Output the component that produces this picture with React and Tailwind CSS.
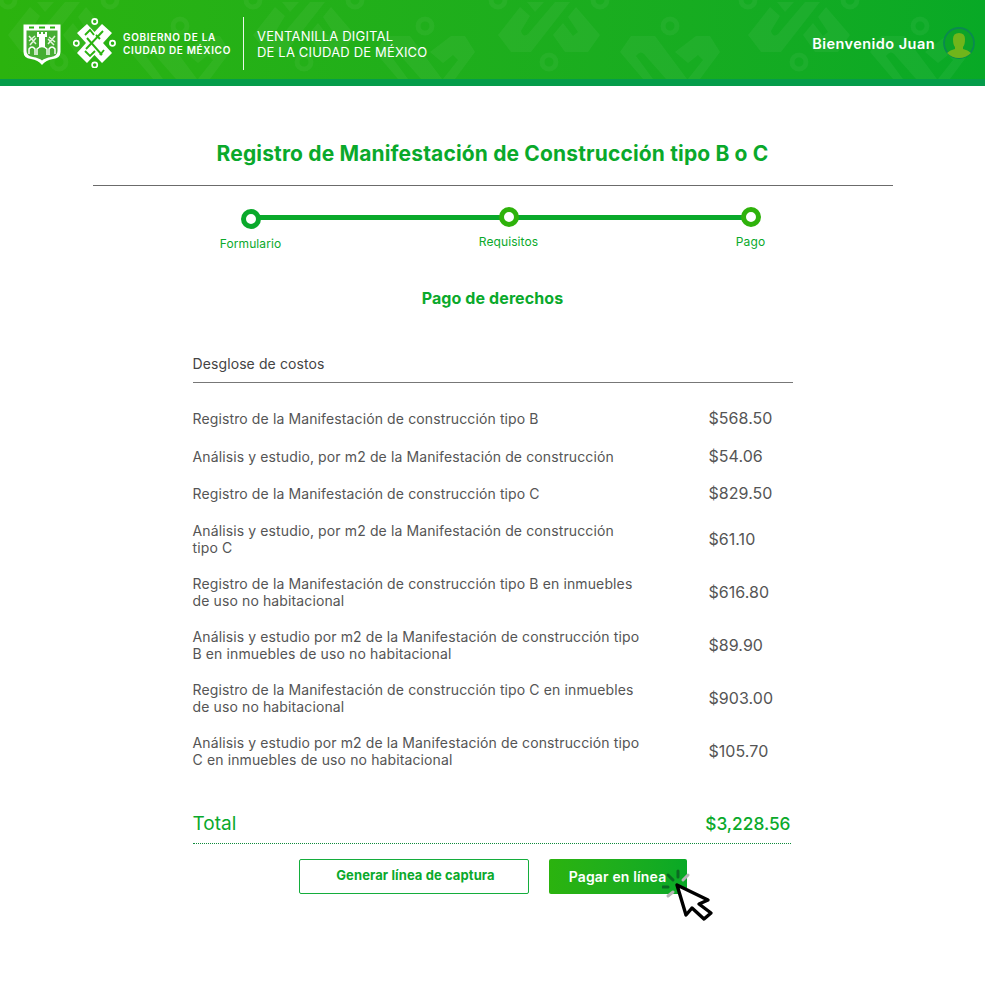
import React from "react";

const costs = [
  { label: ["Registro de la Manifestación de construcción tipo B"], price: "$568.50" },
  { label: ["Análisis y estudio, por m2 de la Manifestación de construcción"], price: "$54.06" },
  { label: ["Registro de la Manifestación de construcción tipo C"], price: "$829.50" },
  { label: ["Análisis y estudio, por m2 de la Manifestación de construcción", "tipo C"], price: "$61.10" },
  { label: ["Registro de la Manifestación de construcción tipo B en inmuebles", "de uso no habitacional"], price: "$616.80" },
  { label: ["Análisis y estudio por m2 de la Manifestación de construcción tipo", "B en inmuebles de uso no habitacional"], price: "$89.90" },
  { label: ["Registro de la Manifestación de construcción tipo C en inmuebles", "de uso no habitacional"], price: "$903.00" },
  { label: ["Análisis y estudio por m2 de la Manifestación de construcción tipo", "C en inmuebles de uso no habitacional"], price: "$105.70" },
];

// one repeat of the faint background pattern in the header
function Tile({ x }) {
  return (
    <g transform={`translate(${x} 0)`}>
      <g fill="#fff" fillOpacity="0.048">
        <path d="M0 35 L22 7 L32 16 L23 31 Q25 38 30 34 L57 2 H72 L33 52 H13 Z" />
        <path d="M29 2 H46 L37 12 Z" />
        <path d="M55 35 L65 23 L75 36 L80 32 L70 17 L78 7 L102 35 L90 52 H67 Z" />
        <path d="M122 52 L133 36 H157 L189 79 H168 L146 54 Q142 50 138 56 L155 79 H145 Z" />
        <path d="M177 52 L198 36 H212 L222 52 L202 79 H190 L205 60 L200 55 L190 63 Z" />
      </g>
      <g fill="none" stroke="#fff" strokeOpacity="0.048" strokeWidth="5">
        <circle cx="0" cy="0" r="7" />
        <circle cx="102" cy="0" r="7" />
        <circle cx="51" cy="62" r="7" />
        <circle cx="172" cy="26" r="7" />
      </g>
    </g>
  );
}

function HeaderPattern() {
  return (
    <svg className="absolute inset-0" width="985" height="79" viewBox="0 0 985 79">
      {[8, 253, 498, 748].map((x) => (
        <Tile key={x} x={x} />
      ))}
    </svg>
  );
}

function Shield() {
  return (
    <svg width="38" height="41" viewBox="0 0 38 41" className="shrink-0">
      <path d="M0.5 0.5 H37.5 V28 Q37.5 34 30 35 Q23 36 19 41 Q15 36 8 35 Q0.5 34 0.5 28 Z" fill="#fff" />
      <path d="M3.5 6.5 H34.5 V27 Q34.5 32 28 33 Q22 34 19 36.5 Q16 34 10 33 Q3.5 32 3.5 27 Z" fill="#46ad33" />
      <path d="M14 8 h2 v2 h2 v-2 h2 v2 h2 v-2 h2 v5 h-2 v10 h-6 V13 h-2 Z" fill="#fff" />
      <path d="M6 12 L13 20 M6 17 L12 12 M7 21 L13 14 M25 20 L32 12 M26 13 L32 18 M25 15 L31 21" stroke="#e6f5e0" strokeWidth="1.5" />
      <path d="M6 30 v-5 q3 -4 6 0 v6 M14 31 v-6 q5 -5 10 0 v6 M26 31 v-6 q3 -4 6 0 v5" fill="none" stroke="#fff" strokeWidth="1.4" />
      <path d="M6 3.5 h5 M16 3.5 h6 M27 3.5 h5" stroke="#2ab30f" strokeWidth="2" />
    </svg>
  );
}

function CdmxMark() {
  return (
    <svg width="43" height="50" viewBox="0 0 43 50" className="shrink-0">
      <path d="M4 15 L14 6 L21.5 14 L29 6 L39 15 L30 25 L39 35 L29 45 L21.5 37 L14 45 L4 35 L13 25 Z" fill="#fff" />
      <g fill="none" stroke="#2ab30f" strokeWidth="1.9">
        <path d="M12 17 L17 12 L21 17" />
        <path d="M30 13 L13 31" />
        <path d="M14 20 L29 37" />
        <path d="M22 33 L17 38 L12 33" />
        <path d="M31 32 L27 37" />
        <path d="M23 17 L27 21" />
      </g>
      <g fill="none" stroke="#fff" strokeWidth="1.7">
        <circle cx="21.7" cy="3.5" r="2.6" />
        <circle cx="21.7" cy="47" r="2.6" />
        <circle cx="3.3" cy="25.3" r="2.6" />
        <circle cx="39.5" cy="25.3" r="2.6" />
      </g>
    </svg>
  );
}

function Avatar() {
  return (
    <svg width="32" height="32" viewBox="0 0 32 32" className="shrink-0 mb-[2px]">
      <circle cx="16" cy="16" r="15" fill="#0ba428" stroke="#0a8a50" strokeWidth="1.8" />
      <path d="M10 12 Q10 6 16 6 Q22 6 22 12 Q22 18 20 20 V22 Q25 23 28 26 Q23 31 16 31 Q9 31 4 26 Q7 23 12 22 V20 Q10 18 10 12 Z" fill="#70b51b" />
    </svg>
  );
}

function Step({ label, className, labelClass, ringClass }) {
  return (
    <div className={`relative flex flex-col items-center w-0 ${className}`}>
      <div className={`w-5 h-5 shrink-0 rounded-full bg-white border-[5px] ${ringClass}`} />
      <span className={`whitespace-nowrap text-[12px] leading-[15px] tracking-[0.1px] text-[#0aa92b] ${labelClass}`}>{label}</span>
    </div>
  );
}

function Cursor() {
  return (
    <svg width="54" height="56" viewBox="0 0 54 56" className="absolute left-[113px] top-[8px] pointer-events-none">
      <g strokeWidth="3" strokeLinecap="round">
        <path d="M16 4 V10" stroke="#0b6a22" />
        <path d="M6 8 L11 13" stroke="#0b6a22" />
        <path d="M26 8 L21 13" stroke="#b5b5b5" />
        <path d="M1 20 H6" stroke="#0b6a22" />
        <path d="M6 29 L11 25" stroke="#b5b5b5" />
      </g>
      <path d="M15 18 L46 33 L37 37 L49 46 L42 52 L30 41 L24 48 Z" fill="#fff" stroke="#000" strokeWidth="3.4" strokeLinejoin="round" />
    </svg>
  );
}

export default function App() {
  return (
    <div className="min-h-[988px] bg-white font-['Inter','Liberation_Sans',sans-serif]">
      <header className="relative h-[86px] border-b-[7px] border-[#059c4a] bg-gradient-to-r from-[#2bb30e] to-[#08a926] overflow-hidden">
        <HeaderPattern />
        <div className="relative h-full flex items-center pt-[9px] pl-[23px] pr-[10px]">
          <Shield />
          <div className="ml-[12px] mb-[2px]">
            <CdmxMark />
          </div>
          <div className="ml-[7px] text-white font-semibold text-[10px] leading-[13px] tracking-[0.66px] whitespace-nowrap">
            <div>GOBIERNO DE LA</div>
            <div>CIUDAD DE MÉXICO</div>
          </div>
          <div className="ml-[12px] mb-[2px] h-[53px] w-px bg-white/90" />
          <div className="ml-[13px] text-white text-[13px] leading-[16px] tracking-[0.17px] whitespace-nowrap">
            <div>VENTANILLA DIGITAL</div>
            <div>DE LA CIUDAD DE MÉXICO</div>
          </div>
          <div className="ml-auto flex items-center gap-[8px]">
            <span className="text-white font-semibold text-[14.5px] tracking-[0.45px] mb-[1px]">Bienvenido Juan</span>
            <Avatar />
          </div>
        </div>
      </header>

      <main className="mx-auto w-[800px] pt-[55px]">
        <h1 className="text-center text-[21px] leading-[26px] font-bold tracking-[0.15px] text-[#0aa92b]">
          Registro de Manifestación de Construcción tipo B o C
        </h1>
        <div className="mt-[18px] border-t border-[#6b6b6b]" />

        <div className="mt-[21px] ml-[158px] mr-[142px] h-[58px] relative flex">
          <div className="absolute left-0 right-0 top-[8px] h-[5px] bg-[#0aa92b]" />
          <Step label="Formulario" className="mt-[2px]" labelClass="mt-[7px]" ringClass="border-[#0aa92b]" />
          <Step label="Requisitos" className="ml-[258px]" labelClass="mt-[7px]" ringClass="border-[#2eb20b]" />
          <Step label="Pago" className="ml-[242px]" labelClass="mt-[7px]" ringClass="border-[#2eb20b]" />
        </div>

        <h2 className="mt-[23px] text-center text-[16px] leading-[20px] font-bold tracking-[0.1px] text-[#0aa92b]">Pago de derechos</h2>

        <section className="mt-[47px] mx-[100px] w-[600px]">
          <div className="text-[14px] leading-[18px] tracking-[0.1px] text-[#444] pb-[9px] border-b border-[#777]">Desglose de costos</div>
          <div className="mt-[17px]">
            {costs.map((c) => (
              <div key={c.price} className="flex items-center min-h-[37.5px] py-[9.5px] text-[#555]">
                <div className="w-[516px] text-[14px] leading-[17px] tracking-[0.12px]">
                  {c.label.map((line) => (
                    <div key={line}>{line}</div>
                  ))}
                </div>
                <div className="text-[16px] leading-[17px] tracking-[0.05px]">{c.price}</div>
              </div>
            ))}
          </div>
          <div className="mt-[35px] w-[598px] flex items-center justify-between pb-[8px] border-b border-dotted border-[#0f8a3a] text-[#0aa92b]">
            <span className="text-[19px] leading-[22px]">Total</span>
            <span className="text-[17.3px] leading-[22px] font-medium">$3,228.56</span>
          </div>
          <div className="mt-[15px] flex justify-center gap-[20px]">
            <button className="w-[230px] h-[35px] pl-[4px] rounded-[2px] border border-[#14ad3c] bg-white text-[13px] font-bold tracking-[0.1px] text-[#0aa92b]">
              Generar línea de captura
            </button>
            <div className="relative">
              <button className="w-[138px] h-[35px] rounded-[2px] bg-gradient-to-r from-[#2bb30e] to-[#08a926] text-[14px] font-semibold tracking-[0.15px] text-white">
                Pagar en línea
              </button>
              <Cursor />
            </div>
          </div>
        </section>
      </main>
    </div>
  );
}
